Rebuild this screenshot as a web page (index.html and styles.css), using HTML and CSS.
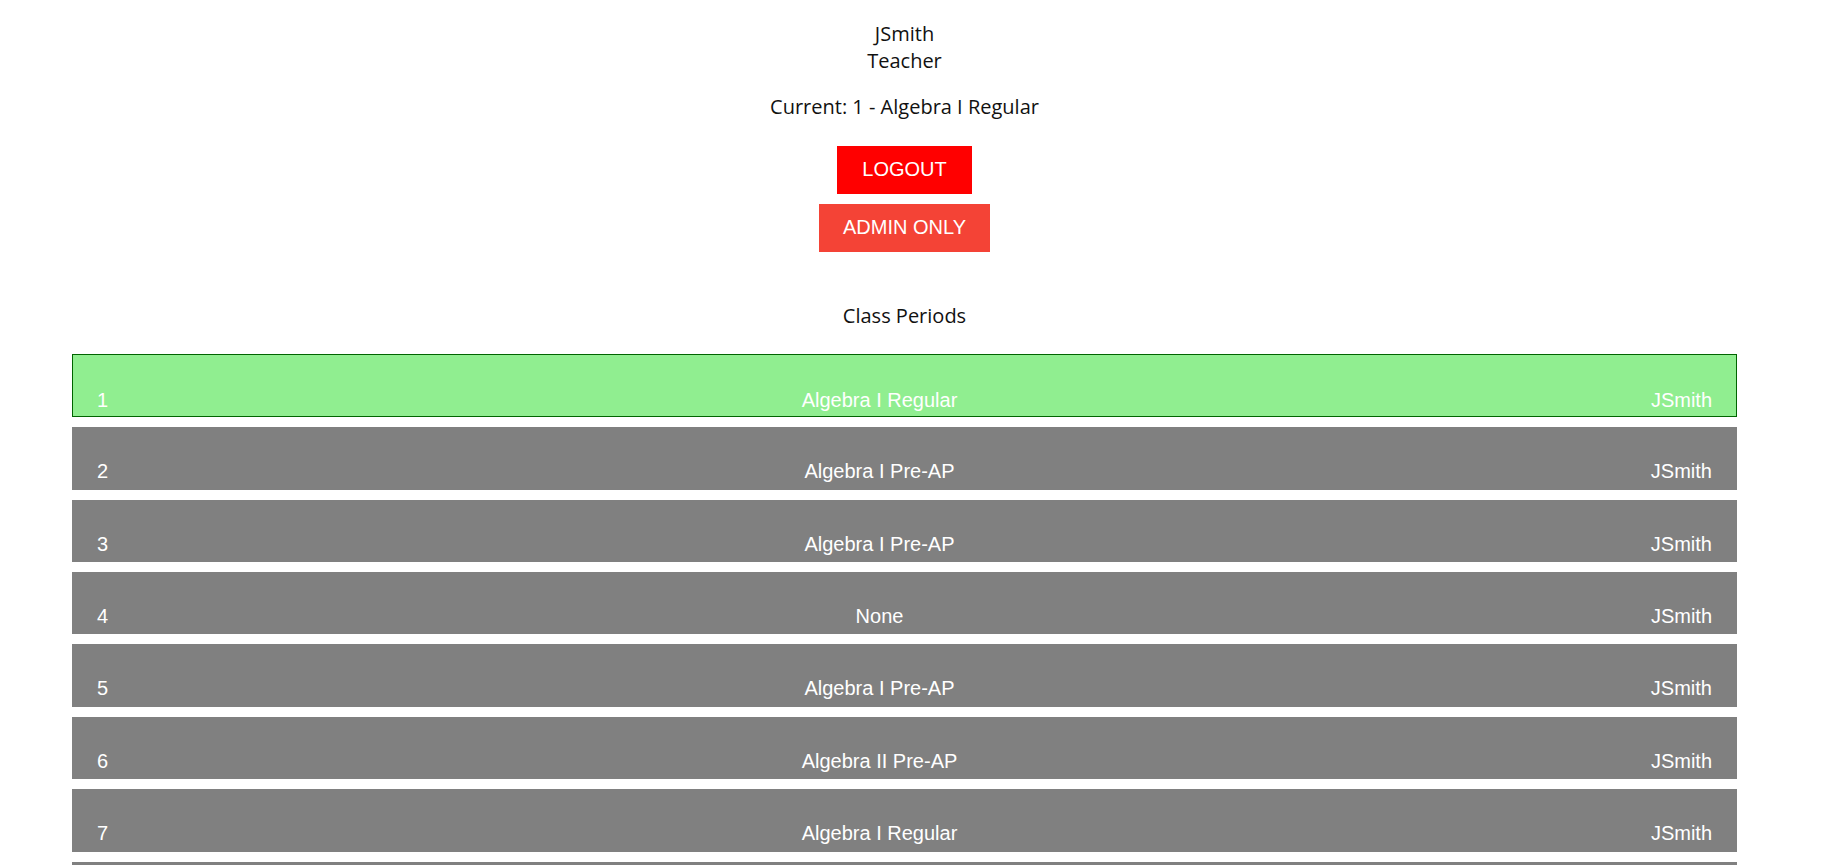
FILE: index.html
```html
<!DOCTYPE html>
<html lang="en">
<head>
<meta charset="utf-8">
<title>Class Periods</title>
<link rel="stylesheet" href="styles.css">
</head>
<body>
<div class="page">
  <header class="user">
    <div class="user-name">JSmith</div>
    <div class="user-role">Teacher</div>
    <p class="current">Current: 1 - Algebra I Regular</p>
    <div class="actions">
      <button class="btn btn-logout">LOGOUT</button>
      <button class="btn btn-admin">ADMIN ONLY</button>
    </div>
  </header>
  <h2 class="section-title">Class Periods</h2>
  <ul class="periods">
    <li class="period period-active"><span class="num">1</span><span class="name">Algebra I Regular</span><span class="teacher">JSmith</span></li>
    <li class="period"><span class="num">2</span><span class="name">Algebra I Pre-AP</span><span class="teacher">JSmith</span></li>
    <li class="period"><span class="num">3</span><span class="name">Algebra I Pre-AP</span><span class="teacher">JSmith</span></li>
    <li class="period"><span class="num">4</span><span class="name">None</span><span class="teacher">JSmith</span></li>
    <li class="period"><span class="num">5</span><span class="name">Algebra I Pre-AP</span><span class="teacher">JSmith</span></li>
    <li class="period"><span class="num">6</span><span class="name">Algebra II Pre-AP</span><span class="teacher">JSmith</span></li>
    <li class="period"><span class="num">7</span><span class="name">Algebra I Regular</span><span class="teacher">JSmith</span></li>
    <li class="period"><span class="num">8</span><span class="name">Algebra I Regular</span><span class="teacher">JSmith</span></li>
  </ul>
</div>
</body>
</html>
```
FILE: styles.css
```css
html, body {
  margin: 0;
  padding: 0;
  background: #ffffff;
}

body {
  font-family: "Open Sans", "Noto Sans", sans-serif;
  color: #111111;
}

.page {
  width: 1665px;
  margin-left: 72px;
  padding-top: 20px;
}

.user {
  display: flex;
  flex-direction: column;
  align-items: center;
  font-size: 20px;
  line-height: 27.2px;
}

.current {
  margin: 19px 0 0 0;
}

.actions {
  display: flex;
  flex-direction: column;
  align-items: center;
  gap: 10px;
  margin-top: 25px;
}

.btn {
  border: none;
  margin: 0;
  height: 48px;
  padding: 0 24px;
  font-family: "Liberation Sans", Arial, sans-serif;
  font-size: 20px;
  color: #ffffff;
  cursor: pointer;
}

.btn-logout {
  background: #ff0000;
  padding: 0 25.5px;
}

.btn-admin {
  background: #f44336;
}

.section-title {
  margin: 50px 0 0 0;
  font-size: 20px;
  font-weight: 400;
  line-height: 27.2px;
  text-align: center;
}

.periods {
  list-style: none;
  margin: 25px 0 0 0;
  padding: 0;
  display: flex;
  flex-direction: column;
  gap: 10px;
}

.period {
  box-sizing: border-box;
  height: 62.4px;
  display: flex;
  justify-content: space-between;
  align-items: flex-end;
  padding: 0 24px 5.5px 24px;
  background: #808080;
  border: 1px solid #808080;
  font-family: "Liberation Sans", Arial, sans-serif;
  font-size: 20px;
  line-height: 23px;
  color: #ffffff;
}

.period-active {
  height: 63.5px;
  padding-bottom: 4.5px;
  background: #90ee90;
  border-color: #006400;
}
```
